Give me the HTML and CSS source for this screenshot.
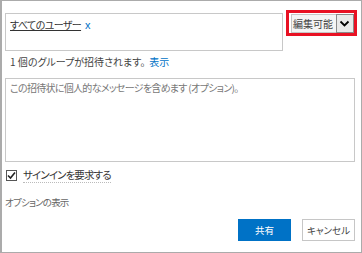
FILE: index.html
```html
<!DOCTYPE html>
<html lang="ja">
<head>
    <meta charset="UTF-8">
    <title>共有</title>
    <link rel="stylesheet" href="styles.css">
</head>
<body>
    <div class="dialog">
        <div class="top-row">
            <div class="picker">
                <span class="entity">すべてのユーザー</span><span class="remove">x</span>
            </div>
            <div class="highlight">
                <div class="perm-select">
                    <span class="perm-value">編集可能</span>
                    <span class="perm-arrow">
                        <svg width="11" height="8" viewBox="0 0 11 8"><path d="M1.5 1.5 L5.5 5.5 L9.5 1.5" fill="none" stroke="#000" stroke-width="1.8"/></svg>
                    </span>
                </div>
            </div>
        </div>
        <div class="invite-info">1 個のグループが招待されます。<a class="link">表示</a></div>
        <div class="message">この招待状に個人的なメッセージを含めます (オプション)。</div>
        <label class="signin">
            <span class="checkbox">
                <svg width="9" height="9" viewBox="0 0 9 9"><path d="M1 4.5 L3.5 7 L8 1.5" fill="none" stroke="#222" stroke-width="1.6"/></svg>
            </span>
            <span class="signin-text">サインインを要求する</span>
        </label>
        <div class="options">オプションの表示</div>
        <div class="actions">
            <button class="btn primary">共有</button>
            <button class="btn">キャンセル</button>
        </div>
    </div>
</body>
</html>
```

FILE: styles.css
```css
body {
    margin: 0;
    background: #ffffff;
    font-family: "Noto Sans CJK JP", "Noto Sans", sans-serif;
    font-feature-settings: "palt";
    color: #444444;
}

.dialog {
    width: 362px;
    height: 253px;
    box-sizing: border-box;
    border: 1px solid #ababab;
    border-left-width: 2px;
    padding: 9px 4px 0 3px;
}

.top-row {
    display: flex;
    align-items: flex-start;
}

.picker {
    width: 279px;
    height: 38px;
    box-sizing: border-box;
    margin-top: 3px;
    border: 1px solid #c8c8c8;
    padding: 4px 4px;
    font-size: 10px;
    line-height: 14px;
}

.entity {
    color: #333333;
    text-decoration: underline;
    letter-spacing: -0.6px;
}

.remove {
    color: #0072c6;
    margin-left: 4px;
    font-family: "Liberation Sans", sans-serif;
    font-size: 11px;
}

.highlight {
    margin-left: 3px;
    width: 71px;
    height: 26px;
    box-sizing: border-box;
    border: 3px solid #e81123;
    padding: 1px 0 0 2px;
}

.perm-select {
    display: flex;
    height: 19px;
    border: 1px solid #c6c6c6;
    background: #f4f4f4;
    box-sizing: border-box;
    width: 63px;
}

.perm-value {
    font-size: 10px;
    line-height: 17px;
    color: #444444;
    padding-left: 1px;
    width: 45px;
    white-space: nowrap;
}

.perm-arrow {
    width: 17px;
    display: flex;
    align-items: center;
    justify-content: center;
    border: 1px solid #8a8a8a;
    margin: -1px -1px -1px 0;
    background: #e9e9e9;
}

.invite-info {
    margin-top: 3px;
    padding-left: 5px;
    font-size: 10px;
    line-height: 16px;
    color: #444444;
}

.link {
    color: #0072c6;
    margin-left: 4px;
}

.message {
    margin-top: 8px;
    width: 350px;
    height: 84px;
    box-sizing: border-box;
    border: 1px solid #c8c8c8;
    padding: 2px 4px;
    font-size: 10px;
    line-height: 14px;
    letter-spacing: -0.7px;
    color: #777777;
}

.signin {
    display: flex;
    align-items: center;
    margin-top: 7px;
    margin-left: 1px;
    height: 13px;
}

.checkbox {
    width: 9px;
    height: 9px;
    border: 1px solid #555555;
    display: flex;
    align-items: center;
    justify-content: center;
}

.signin-text {
    margin-left: 6px;
    font-size: 10.5px;
    line-height: 14px;
    letter-spacing: -0.9px;
    color: #333333;
    border-bottom: 1px dotted #bbbbbb;
}

.options {
    margin-top: 13px;
    font-size: 9.5px;
    line-height: 14px;
    letter-spacing: -0.8px;
    color: #666666;
}

.actions {
    display: flex;
    justify-content: flex-end;
    gap: 11px;
    margin-top: 10px;
    padding-right: 2px;
}

.btn {
    width: 53px;
    height: 22px;
    border: 1px solid #c6c6c6;
    background: #ffffff;
    font-family: "Noto Sans CJK JP", "Noto Sans", sans-serif;
    font-feature-settings: "palt";
    font-size: 9.5px;
    color: #444444;
    padding: 0;
}

.btn.primary {
    background: #0072c6;
    border-color: #0072c6;
    color: #ffffff;
}
```
